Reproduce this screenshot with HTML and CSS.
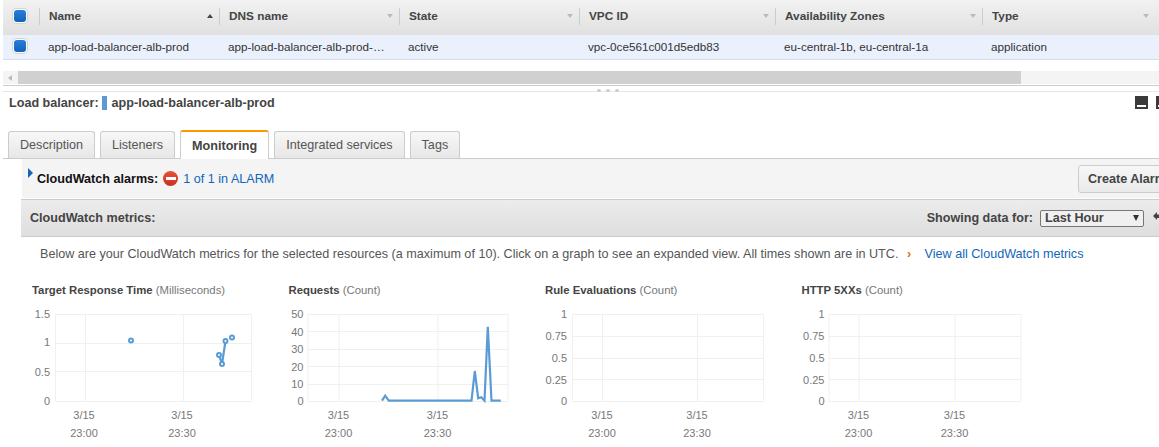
FILE: index.html
```html
<!DOCTYPE html>
<html lang="en">
<head>
    <meta charset="UTF-8">
    <title>Load Balancers</title>
    <link rel="stylesheet" href="styles.css">
</head>
<body>
    <div class="grid-head">
        <div class="cell cell-check"><span class="check"><span class="check-fill"></span></span></div>
        <div class="cell col-name"><span>Name</span><span class="sort sort-up"></span></div>
        <div class="cell col-dns"><span>DNS name</span><span class="sort"></span></div>
        <div class="cell col-state"><span>State</span><span class="sort"></span></div>
        <div class="cell col-vpc"><span>VPC ID</span><span class="sort"></span></div>
        <div class="cell col-az"><span>Availability Zones</span><span class="sort"></span></div>
        <div class="cell col-type"><span>Type</span><span class="sort"></span></div>
    </div>
    <div class="grid-row">
        <div class="cell cell-check"><span class="check"><span class="check-fill"></span></span></div>
        <div class="cell col-name">app-load-balancer-alb-prod</div>
        <div class="cell col-dns">app-load-balancer-alb-prod-…</div>
        <div class="cell col-state">active</div>
        <div class="cell col-vpc">vpc-0ce561c001d5edb83</div>
        <div class="cell col-az">eu-central-1b, eu-central-1a</div>
        <div class="cell col-type">application</div>
    </div>

    <div class="hscroll">
        <span class="hscroll-arrow"></span>
        <div class="hscroll-thumb"></div>
    </div>

    <div class="splitter">
        <span class="grip"></span><span class="grip"></span><span class="grip"></span>
    </div>

    <div class="detail-bar">
        <div class="detail-title">
            <strong>Load balancer:</strong>
            <span class="color-mark"></span>
            <strong>app-load-balancer-alb-prod</strong>
        </div>
        <div class="dock-icons">
            <span class="dock-icon"></span>
            <span class="dock-icon"></span>
        </div>
    </div>

    <div class="tabs">
        <div class="tab">Description</div>
        <div class="tab">Listeners</div>
        <div class="tab tab-active">Monitoring</div>
        <div class="tab">Integrated services</div>
        <div class="tab">Tags</div>
    </div>

    <div class="alarms">
        <div class="alarms-left">
            <span class="expander"></span>
            <strong>CloudWatch alarms:</strong>
            <span class="no-entry"></span>
            <a class="link" href="#">1 of 1 in ALARM</a>
        </div>
        <button class="create-alarm">Create Alarm</button>
    </div>

    <div class="metrics-head">
        <strong>CloudWatch metrics:</strong>
        <div class="range">
            <strong>Showing data for:</strong>
            <div class="range-select"><span>Last Hour</span><span class="range-arrow"></span></div>
            <svg class="refresh" width="12" height="12" viewBox="0 0 12 12"><path d="M0 4L4 0V2.500H9Q12 2.500 12 6V10H9V6H4V8Z" fill="#444"/></svg>
        </div>
    </div>

    <p class="intro">
        Below are your CloudWatch metrics for the selected resources (a maximum of 10). Click on a graph to see an expanded view. All times shown are in UTC.
        <span class="chevron">›</span>
        <a class="link" href="#">View all CloudWatch metrics</a>
    </p>

    <div class="charts">
        <div class="chart">
            <div class="chart-title"><strong>Target Response Time</strong> (Milliseconds)</div>
            <svg class="plot" width="250" height="140" viewBox="32 302 250 140">
                <path class="grid" d="M55.500 314.500H251.500M55.500 343.500H251.500M55.500 371.500H251.500M55.500 401.500H251.500M55.500 314V401M85.500 314V401M183.500 314V401M251.500 314V401"/>
                <text class="ytick" x="50" y="318">1.5</text>
                <text class="ytick" x="50" y="346">1</text>
                <text class="ytick" x="50" y="376">0.5</text>
                <text class="ytick" x="50" y="405">0</text>
                <text class="xtick" x="84" y="419">3/15</text>
                <text class="xtick" x="84" y="437">23:00</text>
                <text class="xtick" x="182" y="419">3/15</text>
                <text class="xtick" x="182" y="437">23:30</text>
                <polyline class="line" points="219,355 222,364 225.500,341"/>
                <circle class="dot" cx="131" cy="340.500" r="2"/>
                <circle class="dot" cx="219" cy="355" r="2"/>
                <circle class="dot" cx="222" cy="364" r="2"/>
                <circle class="dot" cx="225.500" cy="341" r="2"/>
                <circle class="dot" cx="232" cy="337.500" r="2"/>
            </svg>
        </div>
        <div class="chart">
            <div class="chart-title"><strong>Requests</strong> (Count)</div>
            <svg class="plot" width="250" height="140" viewBox="288.500 302 250 140">
                <path class="grid" d="M307.500 314.500H507.500M307.500 331.500H507.500M307.500 349.500H507.500M307.500 366.500H507.500M307.500 384.500H507.500M307.500 401.500H507.500M338.500 314V401M437.500 314V401M307.500 314V401M507.500 314V401"/>
                <text class="ytick" x="303" y="318">50</text>
                <text class="ytick" x="303" y="336">40</text>
                <text class="ytick" x="303" y="353">30</text>
                <text class="ytick" x="303" y="371">20</text>
                <text class="ytick" x="303" y="388">10</text>
                <text class="ytick" x="303" y="405">0</text>
                <text class="xtick" x="338" y="419">3/15</text>
                <text class="xtick" x="338" y="437">23:00</text>
                <text class="xtick" x="437" y="419">3/15</text>
                <text class="xtick" x="437" y="437">23:30</text>
                <polyline class="line" points="381.500,400.700 384.700,395.700 388.300,400.700 471,400.700 474.300,371 477.700,398.300 480.700,397.300 484,400.700 487.300,326.700 491,400.700 500.300,400.700"/>
            </svg>
        </div>
        <div class="chart">
            <div class="chart-title"><strong>Rule Evaluations</strong> (Count)</div>
            <svg class="plot" width="250" height="140" viewBox="545 302 250 140">
                <path class="grid" d="M572.500 314.500H763.500M572.500 336.500H763.500M572.500 358.500H763.500M572.500 379.500H763.500M572.500 401.500H763.500M572.500 314V401M602.500 314V401M697.500 314V401M763.500 314V401"/>
                <text class="ytick" x="567" y="318">1</text>
                <text class="ytick" x="567" y="340">0.75</text>
                <text class="ytick" x="567" y="362">0.5</text>
                <text class="ytick" x="567" y="384">0.25</text>
                <text class="ytick" x="567" y="405">0</text>
                <text class="xtick" x="602" y="419">3/15</text>
                <text class="xtick" x="602" y="437">23:00</text>
                <text class="xtick" x="697" y="419">3/15</text>
                <text class="xtick" x="697" y="437">23:30</text>
            </svg>
        </div>
        <div class="chart">
            <div class="chart-title"><strong>HTTP 5XXs</strong> (Count)</div>
            <svg class="plot" width="250" height="140" viewBox="801.500 302 250 140">
                <path class="grid" d="M828.500 314.500H1020.500M828.500 336.500H1020.500M828.500 358.500H1020.500M828.500 379.500H1020.500M828.500 401.500H1020.500M828.500 314V401M858.500 314V401M954.500 314V401M1020.500 314V401"/>
                <text class="ytick" x="824" y="318">1</text>
                <text class="ytick" x="824" y="340">0.75</text>
                <text class="ytick" x="824" y="362">0.5</text>
                <text class="ytick" x="824" y="384">0.25</text>
                <text class="ytick" x="824" y="405">0</text>
                <text class="xtick" x="858" y="419">3/15</text>
                <text class="xtick" x="858" y="437">23:00</text>
                <text class="xtick" x="954" y="419">3/15</text>
                <text class="xtick" x="954" y="437">23:30</text>
            </svg>
        </div>
    </div>
</body>
</html>
```

FILE: styles.css
```css
html, body {
    margin: 0;
    padding: 0;
    height: 447px;
    overflow: hidden;
}
body {
    background-color: #fff;
    color: #444;
    font-family: "Liberation Sans", Arial, sans-serif;
    font-size: 12.600px;
}
a.link {
    color: #1166bb;
    text-decoration: none;
}

/* top grid */
.grid-head, .grid-row {
    display: flex;
    margin-left: 3px;
}
.grid-head {
    height: 35px;
    padding-bottom: 3px;
    box-sizing: border-box;
    background: linear-gradient(#f2f2f2, #e0e0e0);
    font-weight: bold;
    color: #444;
    font-size: 11.800px;
}
.grid-row {
    height: 25px;
    box-sizing: border-box;
    padding-bottom: 2px;
    background-color: #eaf1fc;
    border-bottom: 1px solid #d5dde8;
    color: #333;
    font-size: 11.700px;
}
.cell {
    display: flex;
    align-items: center;
    flex: none;
    box-sizing: border-box;
    padding-left: 9px;
    position: relative;
    white-space: nowrap;
}
.grid-head .cell {
    padding-left: 10px;
    justify-content: space-between;
    padding-right: 6px;
}
.grid-head .cell::after {
    content: "";
    position: absolute;
    left: 0;
    top: 8px;
    height: 17px;
    width: 1px;
    background-color: #ccc;
}
.grid-head .cell-check::after {
    display: none;
}
.cell-check { width: 36px; }
.grid-head .cell-check, .grid-row .cell-check { padding: 0 0 0 9px; }
.col-name, .col-dns, .col-state { width: 180px; }
.col-vpc { width: 196px; }
.col-az { width: 207px; }
.col-type { width: 173px; }
.check {
    display: flex;
    align-items: center;
    justify-content: center;
    box-sizing: border-box;
    width: 16px;
    height: 16px;
    background-color: #fff;
    border: 1px solid #d4d4d4;
    border-radius: 4px;
}
.check-fill {
    width: 12px;
    height: 12px;
    border-radius: 3px;
    background: linear-gradient(#2a7fdc, #1162bb);
}
.sort {
    width: 0;
    height: 0;
    border-left: 3.500px solid transparent;
    border-right: 3.500px solid transparent;
    border-top: 4px solid #bbb;
}
.sort-up {
    border-top: 0;
    border-bottom: 4px solid #444;
}

/* horizontal scroll bar */
.hscroll {
    display: flex;
    align-items: center;
    margin: 11px 0 0 3px;
    height: 13px;
    background-color: #f4f4f4;
}
.hscroll-arrow {
    margin-left: 5px;
    width: 0;
    height: 0;
    border-top: 3px solid transparent;
    border-bottom: 3px solid transparent;
    border-right: 4px solid #bbb;
}
.hscroll-thumb {
    margin-left: 6px;
    width: 1003px;
    height: 13px;
    background-color: #d0d0d0;
}

.splitter {
    display: flex;
    justify-content: center;
    gap: 5px;
    box-sizing: border-box;
    height: 7px;
    margin: 1px 0 0 3px;
    padding: 3px 0 0 53px;
    border-top: 1px solid #ccc;
    border-bottom: 1px solid #e6e6e6;
}
.grip {
    width: 4px;
    height: 3px;
    border-radius: 50%;
    background-color: #ccc;
}

/* details */
.detail-bar {
    display: flex;
    align-items: center;
    justify-content: space-between;
    height: 21px;
    padding-left: 9px;
}
.detail-title {
    display: flex;
    align-items: center;
    color: #444;
}
.color-mark {
    width: 5px;
    height: 14px;
    margin: 0 5px 0 3px;
    background-color: #5b9bd5;
}
.dock-icons {
    display: flex;
    gap: 8px;
    margin-right: -10px;
}
.dock-icon {
    display: flex;
    align-items: flex-end;
    box-sizing: border-box;
    width: 13px;
    height: 13px;
    padding: 0 2px 2px;
    background-color: #3a3a3a;
}
.dock-icon::after {
    content: "";
    width: 100%;
    height: 2px;
    background-color: #fff;
}

.tabs {
    display: flex;
    gap: 5px;
    height: 28px;
    margin: 18px 0 0 3px;
    padding-left: 5px;
    border-bottom: 1px solid #ccc;
    box-sizing: border-box;
}
.tab {
    display: flex;
    align-items: center;
    box-sizing: border-box;
    height: 27px;
    padding: 0 11px;
    background: linear-gradient(#f7f7f7, #e7e7e7);
    border: 1px solid #ccc;
    border-bottom: 0;
    border-radius: 3px 3px 0 0;
    color: #555;
}
.tab-active {
    height: 29px;
    margin-top: -1px;
    background: #fff;
    border-top: 2px solid #f90;
    font-weight: bold;
    color: #444;
    position: relative;
}

.alarms {
    display: flex;
    align-items: center;
    justify-content: space-between;
    height: 39px;
    margin-left: 22px;
    margin-bottom: 1px;
    background-color: #f4f4f4;
}
.alarms-left {
    display: flex;
    align-items: center;
    padding-left: 6px;
    position: relative;
    color: #111;
}
.expander {
    position: absolute;
    left: 6px;
    top: -3px;
    width: 0;
    height: 0;
    border-top: 5px solid transparent;
    border-bottom: 5px solid transparent;
    border-left: 5px solid #1166bb;
}
.alarms-left strong {
    margin-left: 9px;
}
.no-entry {
    display: flex;
    align-items: center;
    justify-content: center;
    width: 15px;
    height: 15px;
    margin: 0 5px 0 5px;
    border-radius: 50%;
    background: linear-gradient(#e8503a, #c9301f);
}
.no-entry::before {
    content: "";
    width: 10px;
    height: 3px;
    background-color: #fff;
}
.create-alarm {
    flex: none;
    width: 100px;
    height: 28px;
    margin-right: -19px;
    padding: 0 0 0 9px;
    text-align: left;
    white-space: nowrap;
    background: linear-gradient(#f7f7f7, #eaeaea);
    border: 1px solid #ccc;
    border-radius: 3px;
    color: #444;
    font-family: inherit;
    font-size: 12.600px;
    font-weight: bold;
}

.metrics-head {
    display: flex;
    align-items: center;
    justify-content: space-between;
    box-sizing: border-box;
    height: 38px;
    margin-left: 21px;
    padding-left: 9px;
    background: linear-gradient(#ececec, #dedede);
    border-top: 1px solid #ccc;
    border-bottom: 1px solid #ccc;
}
.range {
    display: flex;
    align-items: center;
    margin-right: -6px;
}
.range-select {
    display: flex;
    align-items: center;
    justify-content: space-between;
    box-sizing: border-box;
    width: 104px;
    height: 17px;
    margin: 0 9px 0 7px;
    padding: 0 4px 0 4px;
    background-color: #f0f0f0;
    border: 1px solid #777;
    border-radius: 2px;
    font-weight: bold;
}
.range-arrow {
    width: 0;
    height: 0;
    border-left: 3.500px solid transparent;
    border-right: 3.500px solid transparent;
    border-top: 6px solid #333;
}
.refresh {
    flex: none;
}

.intro {
    margin: 0;
    padding: 10px 0 0 40px;
    height: 43px;
    box-sizing: border-box;
    color: #555;
    white-space: nowrap;
}
.chevron {
    margin: 0 10px 0 5px;
    color: #d9730d;
    font-weight: bold;
}

.charts {
    display: flex;
    padding-left: 32px;
}
.chart {
    flex: none;
    width: 256.500px;
}
.chart-title {
    height: 22px;
    padding-top: 4px;
    box-sizing: border-box;
    font-size: 11.350px;
    color: #777;
}
.chart-title strong {
    color: #444;
}
.plot {
    display: block;
}
.grid {
    fill: none;
    stroke: #f0f0f0;
    stroke-width: 1;
}
.ytick, .xtick {
    font-size: 11px;
    fill: #777;
}
.ytick { text-anchor: end; }
.xtick { text-anchor: middle; }
.line {
    fill: none;
    stroke: #5b9bd5;
    stroke-width: 2.200;
}
.dot {
    fill: #fff;
    stroke: #5b9bd5;
    stroke-width: 2;
}
```
